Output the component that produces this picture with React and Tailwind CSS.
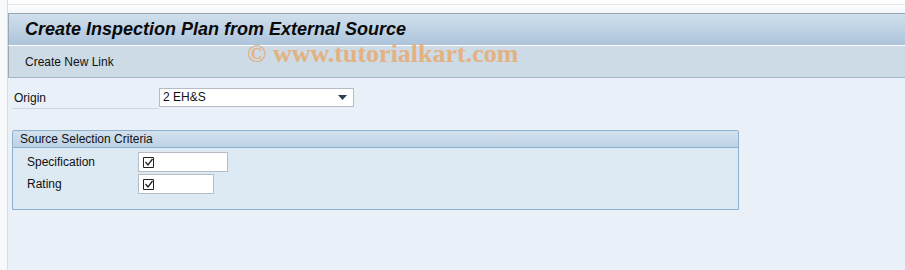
import React from "react";

const Check = () => (
    <svg width="11" height="11" viewBox="0 0 11 11" className="shrink-0">
        <path d="M0.5 0.5 H10.5 V10.5 H0.5 Z" fill="none" stroke="#222" strokeWidth="1" />
        <path d="M2.5 5 L5 8 L9.5 2" fill="none" stroke="#222" strokeWidth="1.3" />
    </svg>
);

const Field = ({ label, width }) => (
    <div className="flex items-center h-[22px]">
        <label className="w-[111px] text-[12px] text-[#111] leading-[20px]">{label}</label>
        <div className="h-[20px] bg-white border border-[#b5bcc4] flex items-center pl-[4px]" style={{ width }}>
            <Check />
        </div>
    </div>
);

export default function App() {
    return (
        <div className="relative w-[905px] h-[270px] overflow-hidden bg-[#f6f8fb] flex" style={{ fontFamily: "'Liberation Sans', Arial, sans-serif" }}>
            <div className="w-[8px] shrink-0 bg-[#f7f9fb] border-r border-[#d6dee8]"></div>
            <div className="flex-1 flex flex-col">
                {/* top strip */}
                <div className="h-[13px] bg-white flex flex-col">
                    <div className="h-[4px]"></div>
                    <div className="h-[1px] bg-[#e2e5e9]"></div>
                    <div className="flex-1 bg-gradient-to-b from-white to-[#f3f5f8]"></div>
                </div>
                {/* title bar */}
                <div className="h-[32px] border-t border-l border-[#9aa8b6] bg-gradient-to-b from-[#d1dfec] to-[#acc4db] flex items-center pl-[16px]">
                    <h1 className="text-[18px] font-bold italic text-[#0a0a0a]">
                        Create Inspection Plan from External Source
                    </h1>
                </div>
                {/* toolbar */}
                <div className="h-[33px] border-t border-white border-b border-b-[#a3b6c8] border-l border-l-[#9aa8b6] bg-[#cddbe6] flex items-center pl-[16px]">
                    <span className="text-[12px] text-[#111]">Create New Link</span>
                </div>
                {/* content */}
                <div className="flex-1 bg-[#e9f0f7] pt-[9px] pl-[4px]">
                    <div className="flex items-center h-[20px]">
                        <label className="w-[147px] pl-[2px] text-[12px] text-[#111] border-b border-[#cfd8e2] leading-[19px] mt-[4px]">Origin</label>
                        <div className="w-[195px] h-[19px] bg-white border border-[#b5bcc4] flex items-center justify-between pl-[3px] pr-[6px] text-[12px] text-[#111]">
                            <span>2 EH&amp;S</span>
                            <svg width="9" height="5" viewBox="0 0 9 5"><path d="M0 0 H9 L4.5 5 Z" fill="#2b3e58" /></svg>
                        </div>
                    </div>
                    <div className="mt-[23px] w-[727px] border border-[#8fb0cc] rounded-t-[2px] bg-[#dde9f3]">
                        <div className="h-[17px] bg-gradient-to-b from-[#d3e1ee] to-[#bdd2e6] border-b border-[#8fb0cc] flex items-center pl-[7px] text-[12px] text-[#111]">
                            Source Selection Criteria
                        </div>
                        <div className="pl-[14px] pt-[3px] pb-[14px] flex flex-col">
                            <Field label="Specification" width="90px" />
                            <Field label="Rating" width="76px" />
                        </div>
                    </div>
                </div>
            </div>
            <div className="absolute left-[247px] top-[34px] text-[26px] font-bold text-[#e9a867] opacity-80 pointer-events-none" style={{ fontFamily: "'Liberation Serif', 'Times New Roman', serif" }}>
                © www.tutorialkart.com
            </div>
        </div>
    );
}
